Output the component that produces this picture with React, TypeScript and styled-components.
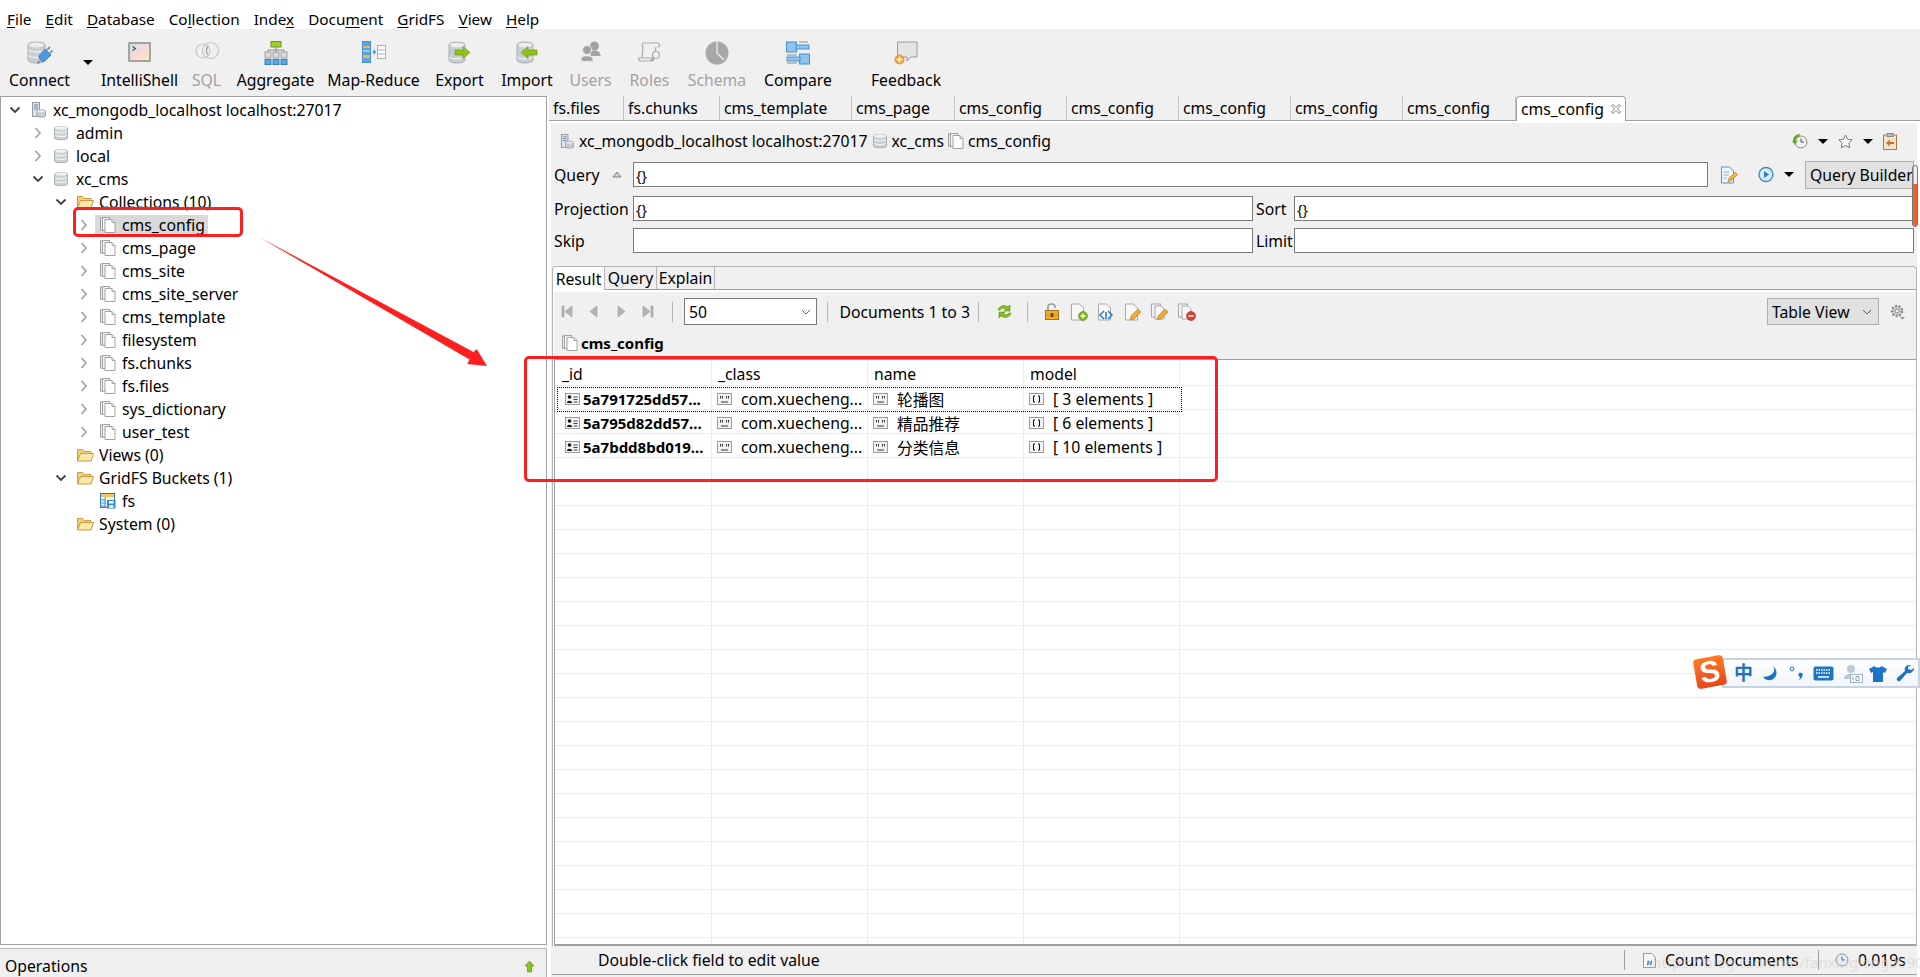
import React from "react";
import styled, { createGlobalStyle } from "styled-components";

const GlobalStyle = createGlobalStyle`
  html, body { margin: 0; padding: 0; background: #fff; }
  body { font-family: "Noto Sans", "Noto Sans CJK SC", sans-serif; font-size: 15.75px; color: #000; }
  * { box-sizing: border-box; }
`;

const Page = styled.div`
  position: relative;
  width: 1920px;
  height: 977px;
  display: flex;
  flex-direction: column;
  overflow: hidden;
  background: #fff;
`;

const MenuBar = styled.div`
  height: 29px;
  display: flex;
  align-items: center;
  gap: 14px;
  padding: 9px 0 0 7px;
  font-size: 15.3px;
  line-height: 20px;
  u { text-underline-offset: 2px; }
`;

const Toolbar = styled.div`
  height: 67px;
  display: flex;
  background: #f0f0f0;
`;

const Tool = styled.div<{ $w: number; $off?: boolean }>`
  width: ${(p) => p.$w}px;
  display: flex;
  flex-direction: column;
  align-items: center;
  padding-top: 12px;
  color: ${(p) => (p.$off ? "#a3a3a3" : "#000")};
  line-height: 20px;
  white-space: nowrap;
`;

const ToolIcon = styled.div`
  height: 29px;
`;

const ToolCaret = styled.div`
  width: 17px;
  padding-top: 31px;
  display: flex;
  justify-content: center;
`;

const Caret = styled.span`
  display: block;
  width: 0;
  height: 0;
  border-left: 5px solid transparent;
  border-right: 5px solid transparent;
  border-top: 5px solid #000;
`;

const Body = styled.div`
  flex: 1;
  display: flex;
  min-height: 0;
`;

const LeftColumn = styled.div`
  width: 547px;
  display: flex;
  flex-direction: column;
`;

const TreePanel = styled.div`
  flex: 1;
  background: #fff;
  border: 1px solid #a0a0a0;
  padding-top: 1px;
`;

const TreeRow = styled.div<{ $level: number }>`
  height: 23px;
  display: flex;
  align-items: center;
  padding-left: ${(p) => 5 + p.$level * 23}px;
  white-space: nowrap;
`;

const Chevron = styled.span`
  width: 18px;
  height: 18px;
  margin-right: 7px;
  display: flex;
  align-items: center;
  justify-content: center;
`;

const TreeEntry = styled.div<{ $sel?: boolean }>`
  display: flex;
  align-items: center;
  height: 20px;
  margin-left: -5px;
  padding: 0 3px 0 5px;
  background: ${(p) => (p.$sel ? "#d9d9d9" : "transparent")};
`;

const TreeIcon = styled.span`
  width: 22px;
  display: flex;
  align-items: center;
`;

const Operations = styled.div`
  height: 29px;
  margin-top: 3px;
  background: #f0f0f0;
  border-top: 1px solid #b4b4b4;
  border-right: 1px solid #b4b4b4;
  display: flex;
  align-items: center;
  justify-content: space-between;
  padding: 6px 11px 0 5px;
`;

const RightColumn = styled.div`
  flex: 1;
  margin-left: 2px;
  margin-right: 3px;
  display: flex;
  flex-direction: column;
  min-width: 0;
`;

const TabStrip = styled.div`
  height: 25px;
  display: flex;
  border-bottom: 1px solid #a0a0a0;
  background: #f0f0f0;
  margin-right: -3px;
`;

const EditorTab = styled.div<{ $w: number; $active?: boolean }>`
  width: ${(p) => p.$w}px;
  height: ${(p) => (p.$active ? "25px" : "24px")};
  padding-left: 4px;
  display: flex;
  align-items: center;
  gap: 6px;
  white-space: nowrap;
  background: ${(p) => (p.$active ? "#fff" : "transparent")};
  border-right: 1px solid ${(p) => (p.$active ? "#a0a0a0" : "#c4c4c4")};
  border-left: ${(p) => (p.$active ? "1px solid #a0a0a0" : "none")};
  border-top: ${(p) => (p.$active ? "1px solid #a0a0a0" : "none")};
  border-radius: ${(p) => (p.$active ? "4px 4px 0 0" : "0")};
`;

const Editor = styled.div`
  flex: 1;
  min-height: 0;
  display: flex;
  flex-direction: column;
  background: #f0f0f0;
  border-top: 2px solid #fff;
  border-left: 2px solid #fff;
`;

const Breadcrumb = styled.div`
  height: 36px;
  margin-bottom: 3px;
  display: flex;
  align-items: center;
  justify-content: space-between;
  padding: 0 20px 0 9px;
`;

const Crumbs = styled.div`
  display: flex;
  align-items: center;
  white-space: nowrap;
`;

const CrumbIcon = styled.span<{ $gap?: number; $after?: number }>`
  display: flex;
  margin-left: ${(p) => p.$gap ?? 0}px;
  margin-right: ${(p) => p.$after ?? 5}px;
`;

const CrumbTools = styled.div`
  display: flex;
  align-items: center;
  gap: 10px;
`;

const FormRow = styled.div<{ $top: number }>`
  height: 25px;
  margin-top: ${(p) => p.$top}px;
  display: flex;
  align-items: center;
  padding-left: 3px;
`;

const FieldLabel = styled.div<{ $w: number }>`
  width: ${(p) => p.$w}px;
  display: flex;
  align-items: center;
  justify-content: space-between;
  padding-right: 11px;
  white-space: nowrap;
`;

const SideLabel = styled.div`
  width: 41px;
  padding-left: 3px;
  white-space: nowrap;
`;

const QueryField = styled.input<{ $w: number }>`
  width: ${(p) => p.$w}px;
  height: 25px;
  border: 1px solid #7a7a7a;
  background: #fff;
  padding: 0 2px;
  margin: 0;
  font-family: inherit;
  font-size: 14.5px;
  color: #000;
  outline: none;
`;

const QueryActions = styled.div`
  display: flex;
  align-items: center;
  margin-left: 12px;
`;

const PlaySlot = styled.span`
  width: 36px;
  margin-left: 9.5px;
  display: flex;
  justify-content: center;
`;

const QueryBuilder = styled.div`
  width: 109px;
  height: 28px;
  margin-left: 11.5px;
  background: #e1e1e1;
  border: 1px solid #adadad;
  padding-left: 4px;
  display: flex;
  align-items: center;
  white-space: nowrap;
  overflow: hidden;
`;

const Folder = styled.div`
  flex: 1;
  min-height: 0;
  margin-top: 13px;
  margin-left: 1px;
  display: flex;
  flex-direction: column;
  border: 1px solid #b4b4b4;
  border-bottom: none;
  border-radius: 4px 4px 0 0;
`;

const FolderTabs = styled.div`
  height: 23px;
  display: flex;
  border-bottom: 1px solid #a0a0a0;
  flex-shrink: 0;
`;

const FolderTab = styled.div<{ $w: number; $active?: boolean }>`
  width: ${(p) => p.$w}px;
  height: ${(p) => (p.$active ? "23px" : "22px")};
  display: flex;
  align-items: center;
  justify-content: center;
  background: ${(p) => (p.$active ? "#fff" : "transparent")};
  border-right: 1px solid #b4b4b4;
  border-radius: ${(p) => (p.$active ? "4px 0 0 0" : "0")};
`;

const ResultPane = styled.div`
  flex: 1;
  min-height: 0;
  display: flex;
  flex-direction: column;
  border-top: 2px solid #fff;
  border-left: 1px solid #fff;
`;

const ResultBar = styled.div`
  height: 39px;
  display: flex;
  align-items: center;
  flex-shrink: 0;
`;

const NavSlot = styled.span<{ $w: number }>`
  width: ${(p) => p.$w}px;
  display: flex;
  justify-content: center;
  align-items: center;
`;

const BarDivider = styled.span<{ $l: number; $r: number }>`
  width: 1px;
  height: 20px;
  background: #b4b4b4;
  margin: 0 ${(p) => p.$r}px 0 ${(p) => p.$l}px;
`;

const PageSize = styled.div`
  width: 133px;
  height: 27px;
  background: #fff;
  border: 1px solid #7a7a7a;
  display: flex;
  align-items: center;
  justify-content: space-between;
  padding: 0 5px 0 4px;
`;

const DocCount = styled.span`
  width: 126px;
  white-space: nowrap;
`;

const ViewPicker = styled.div`
  width: 112px;
  height: 27px;
  margin-left: auto;
  background: #e1e1e1;
  border: 1px solid #adadad;
  display: flex;
  align-items: center;
  justify-content: space-between;
  padding: 0 6px 0 4px;
  white-space: nowrap;
`;

const GearSlot = styled.span`
  width: 37px;
  display: flex;
  justify-content: center;
`;

const TableTitle = styled.div`
  height: 28px;
  display: flex;
  align-items: center;
  gap: 3px;
  padding: 0 0 5px 8px;
  font-weight: 700;
  font-size: 15px;
  flex-shrink: 0;
`;

const Grid = styled.div`
  flex: 1;
  min-height: 0;
  background: #fff;
  border-top: 1px solid #a0a0a0;
  border-left: 1px solid #a0a0a0;
  border-bottom: 2px solid #a0a0a0;
  overflow: hidden;
`;

const GridRow = styled.div<{ $h: number }>`
  height: ${(p) => p.$h}px;
  display: flex;
  border-bottom: 1px solid #ececec;
`;

const FocusRing = styled(GridRow)`
  position: relative;
  &::after {
    content: "";
    position: absolute;
    left: 2px;
    top: 1px;
    width: 623px;
    height: 23px;
    border: 1px dotted #000;
  }
`;

const GridCell = styled.div<{ $w: number; $pad: number }>`
  width: ${(p) => p.$w}px;
  flex-shrink: 0;
  border-right: 1px solid #ececec;
  padding: 3px 0 0 ${(p) => p.$pad}px;
  display: flex;
  align-items: center;
  gap: 9px;
  white-space: nowrap;
  overflow: hidden;
`;

const IdText = styled.span`
  font-weight: 700;
  font-size: 15px;
  margin-left: -6px;
`;

const StatusBar = styled.div`
  height: 29px;
  margin-left: 1px;
  margin-bottom: 2px;
  flex-shrink: 0;
  border-bottom: 1px solid #a0a0a0;
  display: flex;
  align-items: center;
  padding-left: 46px;
`;

const StatusHint = styled.div`
  width: 1026px;
  white-space: nowrap;
`;

const StatusDivider = styled.span`
  width: 1px;
  height: 20px;
  background: #a0a0a0;
`;

const StatusItem = styled.div<{ $w: number; $pad: number }>`
  width: ${(p) => p.$w}px;
  padding-left: ${(p) => p.$pad}px;
  display: flex;
  align-items: center;
  gap: 9px;
  white-space: nowrap;
`;

const Watermark = styled.div`
  position: absolute;
  left: 1652px;
  top: 952px;
  font-size: 15px;
  color: rgba(205, 205, 205, 0.55);
  white-space: nowrap;
`;

const RedBox = styled.div<{ $x: number; $y: number; $w: number; $h: number }>`
  position: absolute;
  left: ${(p) => p.$x}px;
  top: ${(p) => p.$y}px;
  width: ${(p) => p.$w}px;
  height: ${(p) => p.$h}px;
  border: 3px solid #fe2020;
  border-radius: 5px;
`;

const ArrowLayer = styled.svg`
  position: absolute;
  left: 250px;
  top: 230px;
`;

const ScrollMark = styled.div`
  position: absolute;
  left: 1912px;
  top: 165px;
  width: 6px;
  height: 62px;
  border: 1.5px solid #777;
  border-radius: 3px;
  display: flex;
  align-items: flex-end;
`;

const ScrollFill = styled.div`
  width: 100%;
  height: 42px;
  background: #f0602a;
`;

const ImeBar = styled.div`
  position: absolute;
  left: 1722px;
  top: 658px;
  width: 198px;
  height: 30px;
  background: linear-gradient(#ffffff, #f1f5fa);
  border: 2px solid #c6d3e1;
  display: flex;
  align-items: center;
  color: #1c74c4;
`;

const ImeLogo = styled.div`
  position: absolute;
  left: 1695px;
  top: 657px;
  width: 30px;
  height: 30px;
  border-radius: 4px;
  transform: rotate(-10deg);
  background: linear-gradient(#ff7a25, #e8451b);
  color: #fff;
  font-family: "Liberation Sans", sans-serif;
  font-weight: 700;
  font-size: 30px;
  line-height: 30px;
  text-align: center;
`;

const ImeSlot = styled.span<{ $w: number; $ml: number }>`
  width: ${(p) => p.$w}px;
  margin-left: ${(p) => p.$ml}px;
  display: flex;
  justify-content: center;
  align-items: center;
  font-weight: 700;
  font-size: 19px;
  line-height: 1;
`;

// ---- icons ----

const Expand = () => (
  <svg width="12" height="8" viewBox="0 0 12 8">
    <path d="M1.500 1.500 6 6l4.500-4.500" fill="none" stroke="#404040" strokeWidth="1.800" />
  </svg>
);

const Collapse = () => (
  <svg width="8" height="12" viewBox="0 0 8 12">
    <path d="M1.500 1 6 6l-4.500 5" fill="none" stroke="#a6a6a6" strokeWidth="1.800" />
  </svg>
);

const Db = ({ w = 14, h = 16 }: { w?: number; h?: number }) => (
  <svg width={w} height={h} viewBox="0 0 14 16">
    <path d="M.5 3C.5 1 13.500 1 13.500 3v10c0 2.200-13 2.200-13 0z" fill="#cdd2d5" stroke="#a8adb0" />
    <ellipse cx="7" cy="3" rx="6" ry="1.800" fill="#eef0f1" />
    <path d="M.8 6.500c2 1.800 10.400 1.800 12.400 0M.8 10.200c2 1.800 10.400 1.800 12.400 0" fill="none" stroke="#f4f5f6" />
  </svg>
);

const Root = ({ s = 15 }: { s?: number }) => (
  <svg width={s} height={s + 1} viewBox="0 0 15 16">
    <rect x="1.500" y=".5" width="7" height="14" fill="#dfe4ea" stroke="#8d99a6" />
    <path d="M3 3h4M3 5h4M3 7h4" stroke="#6a88a8" />
    <path d="M6 9c0-1.500 8.500-1.500 8.500 0v5c0 1.500-8.500 1.500-8.500 0z" fill="#c9ced2" stroke="#a0a5a9" />
    <ellipse cx="10.200" cy="9.200" rx="3.600" ry="1" fill="#eef0f1" />
  </svg>
);

const Coll = () => (
  <svg width="16" height="16" viewBox="0 0 16 16" fill="#fff" stroke="#a2a2a2">
    <rect x=".5" y="1" width="7" height="12" fill="#eee" />
    <rect x="2.500" y=".5" width="7" height="13" fill="#f4f4f4" />
    <path d="M5 2.500h7l3 3v10H5z" />
    <path d="M12 2.500v3h3" fill="#e4e4e4" />
  </svg>
);

const FolderIcon = () => (
  <svg width="17" height="14" viewBox="0 0 17 14">
    <path d="M.5 13V1.500h5l1.500 2h7v2" fill="#f3cf7c" stroke="#c89b45" />
    <path d="M.5 13l3-7.500h13L14 13z" fill="#fde7a7" stroke="#c89b45" />
  </svg>
);

const BucketIcon = () => (
  <svg width="16" height="16" viewBox="0 0 16 16">
    <rect x=".5" y=".5" width="14" height="14" fill="#e8f3fb" stroke="#2f7fb8" />
    <rect x="1" y="1" width="13" height="3" fill="#f2c65c" />
    <path d="M1 7h5M1 10h5M1 13h5M5 4v10" stroke="#4c94c6" />
    <rect x="7" y="7" width="8.500" height="8.500" fill="#3a8ac4" />
    <rect x="9" y="8" width="4.500" height="2.500" fill="#fff" />
    <rect x="9" y="12" width="4.500" height="3" fill="#cfe6f6" />
  </svg>
);

const ConnectIcon = () => (
  <svg width="26" height="24" viewBox="0 0 26 24">
    <path d="M1 4C1 0 18 0 18 4v15c0 4-17 4-17 0z" fill="#c9ced2" stroke="#a9aeb2" />
    <ellipse cx="9.500" cy="4" rx="7.500" ry="2.500" fill="#eceeef" />
    <path d="M1.500 9c2 2.500 14 2.500 16 0M1.500 14.500c2 2.500 14 2.500 16 0" fill="none" stroke="#f3f4f5" strokeWidth="1.200" />
    <path d="M12 15l6-7 6 6-7 6.500c-2 1-5-3-5-5.500z" fill="#4c9be0" stroke="#3a80c0" />
    <path d="M20 9l3-3M23 12l2.500-2.500M13 20l-2.500 2.500" stroke="#8a8f93" strokeWidth="1.800" />
  </svg>
);

const ShellIcon = () => (
  <svg width="24" height="22" viewBox="0 0 24 22">
    <defs>
      <linearGradient id="shellFill" x1="0" y1="0" x2="1" y2="1">
        <stop offset="0" stopColor="#bfe8e6" />
        <stop offset=".5" stopColor="#fbd7d7" />
        <stop offset="1" stopColor="#f7eeb8" />
      </linearGradient>
    </defs>
    <rect x="1" y="2" width="21" height="18" fill="url(#shellFill)" stroke="#8c8c8c" strokeWidth="1.500" />
    <path d="M4.500 5.500l3 2-3 2" fill="none" stroke="#21606a" strokeWidth="1.100" />
  </svg>
);

const SqlIcon = () => (
  <svg width="24" height="20" viewBox="0 0 24 20" fill="none" stroke="#c6c6c6" strokeWidth="1.200">
    <circle cx="8" cy="10" r="7" />
    <circle cx="15.500" cy="9.500" r="8" />
    <path d="M13 5c-2 2-2 7 0 9" stroke="#9c9c9c" />
  </svg>
);

const AggregateIcon = () => (
  <svg width="24" height="24" viewBox="0 0 24 24">
    <rect x="7" y=".5" width="10" height="5.500" fill="#9ccc2e" stroke="#6f9a1a" />
    <path d="M12 6v3M4 9h16M4 9v2M12 9v2M20 9v2" stroke="#8a8a8a" />
    <g fill="#dcdcdc" stroke="#a0a0a0">
      <rect x="1" y="11" width="6" height="6" />
      <rect x="9" y="11" width="6" height="6" />
      <rect x="17" y="11" width="6" height="6" />
    </g>
    <g fill="#58a8e4" stroke="#3a80c0">
      <rect x="1" y="18.500" width="6" height="5" />
      <rect x="9" y="18.500" width="6" height="5" />
      <rect x="17" y="18.500" width="6" height="5" />
    </g>
  </svg>
);

const MapReduceIcon = () => (
  <svg width="24" height="22" viewBox="0 0 24 22">
    <rect x=".5" y=".5" width="8" height="21" fill="#5aa5e4" stroke="#4a90cc" />
    <path d="M1 5h7v2H1zM1 14h7v3H1z" fill="#f2b544" />
    <path d="M1 10h7" stroke="#cfe6f6" />
    <path d="M10 11l3-3v2h1v2h-1v2z" fill="#5aa5e4" />
    <rect x="15.500" y="4.500" width="8" height="13" fill="#fff" stroke="#b0b0b0" />
    <path d="M15.500 9h8M15.500 13h8" stroke="#b0b0b0" />
  </svg>
);

const TransferIcon = ({ out }: { out: boolean }) => (
  <svg width="23" height="23" viewBox="0 0 23 23">
    <path d="M1 4C1 0 17 0 17 4v15c0 4-16 4-16 0z" fill="#c9ced2" stroke="#a9aeb2" />
    <ellipse cx="9" cy="4" rx="7" ry="2.300" fill="#eceeef" />
    <path d="M1.500 16c2 2.500 13 2.500 15 0" fill="none" stroke="#f3f4f5" strokeWidth="1.200" />
    {out ? (
      <path d="M7 9h8V5.500l7 6-7 6V14H7z" fill="#90c21c" stroke="#6f9a1a" strokeWidth=".7" />
    ) : (
      <path d="M21 9h-9V5.500l-7 6 7 6V14h9z" fill="#90c21c" stroke="#6f9a1a" strokeWidth=".7" />
    )}
  </svg>
);

const UsersIcon = () => (
  <svg width="22" height="22" viewBox="0 0 22 22" fill="#a2a2a2">
    <circle cx="14.500" cy="5" r="4.500" />
    <path d="M10 11c2-2 7-2 9 0l2 4H11z" />
    <circle cx="7" cy="9" r="4.500" stroke="#f0f0f0" />
    <path d="M1 21v-4c1-3 10-3 12 0v4l-2-1-2 1-2-1-2 1-2-1z" stroke="#f0f0f0" />
  </svg>
);

const RolesIcon = () => (
  <svg width="24" height="23" viewBox="0 0 24 23" fill="none" stroke="#ababab" strokeWidth="1.200">
    <path d="M6 2h14c2 0 2 4 0 4M6 2c-2 0-2 3-1 4l-1 11H1c-1 1 0 3 2 3h11c1 0 2-1 2-3H4" />
    <path d="M18 6l-1 5" />
    <circle cx="18" cy="14" r="3.500" />
    <path d="M15.500 17l-3 3" strokeWidth="2" />
  </svg>
);

const SchemaIcon = () => (
  <svg width="24" height="24" viewBox="0 0 24 24">
    <circle cx="12" cy="12" r="11.500" fill="#a8a8a8" />
    <path d="M12 1v11l7 7" fill="none" stroke="#f4f4f4" strokeWidth="1.200" />
  </svg>
);

const CompareIcon = () => (
  <svg width="24" height="24" viewBox="0 0 24 24">
    <g fill="#8cc4f0" stroke="#4a90cc">
      <rect x=".5" y="1" width="10" height="10" />
      <rect x="13.500" y="13" width="10" height="10" />
      <rect x="10" y="4" width="13" height="4" />
      <rect x="1" y="16" width="13" height="4" />
    </g>
    <path d="M13 1h9M1 14h10M1 22h10" stroke="#8a8a8a" />
  </svg>
);

const FeedbackIcon = () => (
  <svg width="24" height="24" viewBox="0 0 24 24">
    <path d="M3.500 1h19.500v15h-6l-4 4v-4H3.500z" fill="#e4e4e4" stroke="#9a9a9a" />
    <circle cx="5.500" cy="18.500" r="5" fill="#ee9a3a" />
    <path d="M5.500 15.500v6M2.500 18.500h6" stroke="#fff" strokeWidth="1.600" />
  </svg>
);

const Clear = () => (
  <svg width="12" height="12" viewBox="0 0 12 12" fill="none" stroke="#808080">
    <path d="M1.500 3 3 1.500 6 4.500 9 1.500 10.500 3 7.500 6 10.500 9 9 10.500 6 7.500 3 10.500 1.500 9 4.500 6z" />
  </svg>
);

const HistoryIcon = () => (
  <svg width="16" height="16" viewBox="0 0 16 16">
    <circle cx="9" cy="9" r="6" fill="#f1f1f1" stroke="#8a8a8a" />
    <path d="M9 5.500V9h3" fill="none" stroke="#555" />
    <path d="M1 8c0-4 3-7 7-7l-1 3c-2 0-3 1-3 4l2-1-3 5-3-4z" fill="#5cae1e" />
  </svg>
);

const StarIcon = () => (
  <svg width="15" height="15" viewBox="0 0 15 15">
    <path d="M7.500 1l2 4.300 4.700.6-3.400 3.200.9 4.700-4.200-2.300-4.200 2.300.9-4.700L.8 5.900l4.700-.6z" fill="#fff" stroke="#777" />
  </svg>
);

const ClipIcon = () => (
  <svg width="14" height="17" viewBox="0 0 14 17">
    <rect x=".5" y="2" width="13" height="14.500" fill="#f6e2c4" stroke="#b47a3c" />
    <rect x="4" y=".5" width="6" height="3" fill="#bbb" stroke="#888" />
    <path d="M11 9H7V6.500L3 10l4 3.500V11h4z" fill="#c0762e" />
  </svg>
);

const EditDocIcon = () => (
  <svg width="18" height="18" viewBox="0 0 18 18">
    <path d="M1.500 1h8l4 4v12h-12z" fill="#eef5fb" stroke="#5c92bf" />
    <path d="M3.500 6h6M3.500 9h5M3.500 12h3" stroke="#8bb4d6" />
    <path d="M8 16l1-4 6-6 2.500 2.500-6 6z" fill="#f0b43c" stroke="#b47a20" strokeWidth=".6" />
  </svg>
);

const PlayIcon = () => (
  <svg width="16" height="17" viewBox="0 0 16 17">
    <circle cx="8" cy="8.500" r="7" fill="#d8ecfb" stroke="#3c8ed0" strokeWidth="1.400" />
    <path d="M6 5l5 3.500L6 12z" fill="#2f7fc4" />
  </svg>
);

const NavIcon = ({ d }: { d: string }) => (
  <svg width="14" height="15" viewBox="0 0 14 15">
    <path d={d} fill="#b4b4b4" stroke="#9a9a9a" strokeWidth=".6" />
  </svg>
);

const RefreshIcon = () => (
  <svg width="17" height="17" viewBox="0 0 17 17" fill="#86bb22" stroke="#5f8f12" strokeWidth=".6">
    <path d="M2 7c1-4 6-6 10-3l2-2v6H8l2-2c-2-1-5-1-6 1z" />
    <path d="M15 10c-1 4-6 6-10 3l-2 2V9h6l-2 2c2 1 5 1 6-1z" />
  </svg>
);

const LockIcon = () => (
  <svg width="14" height="17" viewBox="0 0 14 17">
    <path d="M3 8V4c0-4 7-4 7 0v1" fill="none" stroke="#9a9a9a" strokeWidth="1.600" />
    <rect x=".5" y="7.500" width="13" height="9" fill="#f0ad2e" stroke="#a8701a" />
    <rect x="5.500" y="10" width="3" height="4" fill="#7a4e10" />
    <path d="M1.500 12h3M9.500 12h3" stroke="#c98a20" />
  </svg>
);

const SheetIcon = ({ stacked, badge }: { stacked?: boolean; badge: "add" | "code" | "edit" | "del" }) => (
  <svg width="18" height="18" viewBox="0 0 18 18">
    {stacked && <rect x=".5" y="1" width="9" height="13" fill="#f4f4f4" stroke="#a8a8a8" />}
    <path d={stacked ? "M4 3h6l3 3v10H4z" : "M1.500 1h8l4 4v12h-12z"} fill="#f8f8f8" stroke="#a8a8a8" />
    {badge === "add" && (
      <g>
        <circle cx="13" cy="13" r="4.500" fill="#7cb81e" stroke="#5f8f12" strokeWidth=".6" />
        <path d="M13 10.500v5M10.500 13h5" stroke="#fff" strokeWidth="1.400" />
      </g>
    )}
    {badge === "code" && (
      <path d="M7 8l-4 4 4 4M11 8l4 4-4 4M9 9v7" fill="none" stroke="#2f7fc4" strokeWidth="1.600" />
    )}
    {badge === "edit" && (
      <path d="M6 17l1-4 7-7 3 3-7 7z" fill="#f0a838" stroke="#b47a20" strokeWidth=".6" />
    )}
    {badge === "del" && (
      <g>
        <circle cx="13" cy="13" r="4.500" fill="#e03c32" stroke="#a82820" strokeWidth=".6" />
        <path d="M10.500 13h5" stroke="#fff" strokeWidth="1.600" />
      </g>
    )}
  </svg>
);

const Gear = () => (
  <svg width="17" height="17" viewBox="0 0 17 17">
    <circle cx="8" cy="8" r="5" fill="#d0d0d0" stroke="#8c8c8c" strokeWidth="2.500" strokeDasharray="2 1.500" />
    <circle cx="8" cy="8" r="2" fill="#f0f0f0" stroke="#8c8c8c" />
    <path d="M11 14l2.500 2.500L16 14z" fill="#8c8c8c" />
  </svg>
);

const SmallChevron = () => (
  <svg width="10" height="6" viewBox="0 0 10 6">
    <path d="M1 1l4 4 4-4" fill="none" stroke="#606060" />
  </svg>
);

const DocField = () => (
  <svg width="15" height="12" viewBox="0 0 15 12">
    <rect x=".5" y=".5" width="14" height="11" fill="#f4f4f4" stroke="#9a9a9a" />
    <circle cx="4.500" cy="4" r="1.800" fill="#111" />
    <path d="M2 10c0-3 5-3 5 0z" fill="#111" />
    <path d="M8.500 4h4M8.500 6.500h4M8.500 9h4" stroke="#444" />
  </svg>
);

const TextField = () => (
  <svg width="15" height="12" viewBox="0 0 15 12">
    <rect x=".5" y=".5" width="14" height="11" fill="#f4f4f4" stroke="#9a9a9a" />
    <path d="M3.500 3v2.500M5.500 3v2.500M9.500 3v2.500M11.500 3v2.500M4 9h7" stroke="#333" />
  </svg>
);

const ArrayField = () => (
  <svg width="15" height="12" viewBox="0 0 15 12">
    <rect x=".5" y=".5" width="14" height="11" fill="#f4f4f4" stroke="#9a9a9a" />
    <path d="M6 3H4.500v6H6M9 3h1.500v6H9" fill="none" stroke="#111" />
  </svg>
);

const UpArrow = () => (
  <svg width="11" height="13" viewBox="0 0 11 13">
    <path d="M5.500 1l4.500 5H7.500v6h-4V6H1z" fill="#8ac31e" stroke="#5f8f12" strokeWidth=".7" />
  </svg>
);

const CountIcon = () => (
  <svg width="13" height="15" viewBox="0 0 13 15">
    <path d="M.5.500h8l4 4v10H.5z" fill="#f8f8f8" stroke="#9a9a9a" />
    <path d="M4 9h5M4 11h5M5.500 7.500l-1 5M8.500 7.500l-1 5" stroke="#2f6fa8" strokeWidth=".8" />
  </svg>
);

const ClockIcon = () => (
  <svg width="14" height="14" viewBox="0 0 14 14">
    <circle cx="7" cy="7" r="6" fill="#e8eef6" stroke="#8a8f96" />
    <path d="M7 3.500V7h3" fill="none" stroke="#3c64a8" />
  </svg>
);

const Moon = () => (
  <svg width="17" height="17" viewBox="0 0 17 17">
    <path d="M11 1c3 4 1 10-10 11 3 4 8 4 11 1.500C16 10 15 4 11 1z" fill="currentColor" />
  </svg>
);

const Punct = () => (
  <svg width="15" height="15" viewBox="0 0 15 15" fill="currentColor">
    <circle cx="3" cy="3" r="1.800" fill="none" stroke="currentColor" />
    <path d="M10 7c3-1 5 1 3 4-1 1.500-2 2.500-3.500 3.500 1-1.500 1.500-2.500 1.500-3.500-1.500 0-2-3-1-4z" />
  </svg>
);

const Keyboard = () => (
  <svg width="21" height="15" viewBox="0 0 21 15">
    <rect x=".5" y=".5" width="20" height="14" rx="2" fill="currentColor" />
    <path d="M3 4h15M3 7h15" stroke="#fff" strokeWidth="1.500" strokeDasharray="1.500 1" />
    <path d="M5 11h11" stroke="#fff" strokeWidth="1.500" />
  </svg>
);

const ImeUser = () => (
  <svg width="20" height="19" viewBox="0 0 20 19">
    <circle cx="8" cy="5" r="4" fill="#bcc8d6" />
    <path d="M1 15c0-7 14-7 14 0z" fill="#bcc8d6" />
    <rect x="7.500" y="10.500" width="12" height="8" fill="#fff" stroke="#9fb0c2" />
    <path d="M10 12.500v4M13 12.500h3v4h-3z" fill="none" stroke="#8ca0b6" />
  </svg>
);

const Shirt = () => (
  <svg width="18" height="17" viewBox="0 0 18 17">
    <path d="M5.500 1c1 2 6 2 7 0L18 4l-2 4-2-1v10H4V7L2 8 0 4z" fill="currentColor" />
  </svg>
);

const Wrench = () => (
  <svg width="19" height="18" viewBox="0 0 19 18">
    <path d="M13 1c-3 0-5 3-4 6L1 14c-1 2 1 4 3 3l7-8c3 1 7-1 7-5l-3 2-3-1V3l3-2z" fill="currentColor" />
  </svg>
);

// ---- data ----

const menus: [string, string, string][] = [
  ["", "F", "ile"],
  ["", "E", "dit"],
  ["", "D", "atabase"],
  ["Co", "l", "lection"],
  ["Inde", "x", ""],
  ["Docu", "m", "ent"],
  ["", "G", "ridFS"],
  ["", "V", "iew"],
  ["", "H", "elp"],
];

const editorTabs: [string, number][] = [
  ["fs.files", 75],
  ["fs.chunks", 96],
  ["cms_template", 132],
  ["cms_page", 103],
  ["cms_config", 112],
  ["cms_config", 112],
  ["cms_config", 112],
  ["cms_config", 112],
  ["cms_config", 113],
];

const collections = [
  "cms_config",
  "cms_page",
  "cms_site",
  "cms_site_server",
  "cms_template",
  "filesystem",
  "fs.chunks",
  "fs.files",
  "sys_dictionary",
  "user_test",
];

const docs = [
  ["5a791725dd57...", "com.xuecheng...", "轮播图", "[ 3 elements ]"],
  ["5a795d82dd57...", "com.xuecheng...", "精品推荐", "[ 6 elements ]"],
  ["5a7bdd8bd019...", "com.xuecheng...", "分类信息", "[ 10 elements ]"],
];

const colWidths = [157, 156, 156, 156];
const blankRows = Array.from({ length: 21 }, (_, i) => i);

export default function App() {
  return (
    <Page>
      <GlobalStyle />
      <MenuBar>
        {menus.map(([a, u, b]) => (
          <span key={a + u + b}>
            {a}
            <u>{u}</u>
            {b}
          </span>
        ))}
      </MenuBar>

      <Toolbar>
        <Tool $w={79}>
          <ToolIcon><ConnectIcon /></ToolIcon>
          Connect
        </Tool>
        <ToolCaret><Caret /></ToolCaret>
        <Tool $w={87}>
          <ToolIcon><ShellIcon /></ToolIcon>
          IntelliShell
        </Tool>
        <Tool $w={47} $off>
          <ToolIcon><SqlIcon /></ToolIcon>
          SQL
        </Tool>
        <Tool $w={91}>
          <ToolIcon><AggregateIcon /></ToolIcon>
          Aggregate
        </Tool>
        <Tool $w={105}>
          <ToolIcon><MapReduceIcon /></ToolIcon>
          Map-Reduce
        </Tool>
        <Tool $w={67}>
          <ToolIcon><TransferIcon out /></ToolIcon>
          Export
        </Tool>
        <Tool $w={68}>
          <ToolIcon><TransferIcon out={false} /></ToolIcon>
          Import
        </Tool>
        <Tool $w={59} $off>
          <ToolIcon><UsersIcon /></ToolIcon>
          Users
        </Tool>
        <Tool $w={59} $off>
          <ToolIcon><RolesIcon /></ToolIcon>
          Roles
        </Tool>
        <Tool $w={76} $off>
          <ToolIcon><SchemaIcon /></ToolIcon>
          Schema
        </Tool>
        <Tool $w={86}>
          <ToolIcon><CompareIcon /></ToolIcon>
          Compare
        </Tool>
        <Tool $w={130}>
          <ToolIcon><FeedbackIcon /></ToolIcon>
          Feedback
        </Tool>
      </Toolbar>

      <Body>
        <LeftColumn>
          <TreePanel>
            <TreeRow $level={0}>
              <Chevron><Expand /></Chevron>
              <TreeEntry><TreeIcon><Root /></TreeIcon>xc_mongodb_localhost localhost:27017</TreeEntry>
            </TreeRow>
            <TreeRow $level={1}>
              <Chevron><Collapse /></Chevron>
              <TreeEntry><TreeIcon><Db /></TreeIcon>admin</TreeEntry>
            </TreeRow>
            <TreeRow $level={1}>
              <Chevron><Collapse /></Chevron>
              <TreeEntry><TreeIcon><Db /></TreeIcon>local</TreeEntry>
            </TreeRow>
            <TreeRow $level={1}>
              <Chevron><Expand /></Chevron>
              <TreeEntry><TreeIcon><Db /></TreeIcon>xc_cms</TreeEntry>
            </TreeRow>
            <TreeRow $level={2}>
              <Chevron><Expand /></Chevron>
              <TreeEntry><TreeIcon><FolderIcon /></TreeIcon>Collections (10)</TreeEntry>
            </TreeRow>
            {collections.map((name, i) => (
              <TreeRow $level={3} key={name}>
                <Chevron><Collapse /></Chevron>
                <TreeEntry $sel={i === 0}><TreeIcon><Coll /></TreeIcon>{name}</TreeEntry>
              </TreeRow>
            ))}
            <TreeRow $level={2}>
              <Chevron />
              <TreeEntry><TreeIcon><FolderIcon /></TreeIcon>Views (0)</TreeEntry>
            </TreeRow>
            <TreeRow $level={2}>
              <Chevron><Expand /></Chevron>
              <TreeEntry><TreeIcon><FolderIcon /></TreeIcon>GridFS Buckets (1)</TreeEntry>
            </TreeRow>
            <TreeRow $level={3}>
              <Chevron />
              <TreeEntry><TreeIcon><BucketIcon /></TreeIcon>fs</TreeEntry>
            </TreeRow>
            <TreeRow $level={2}>
              <Chevron />
              <TreeEntry><TreeIcon><FolderIcon /></TreeIcon>System (0)</TreeEntry>
            </TreeRow>
          </TreePanel>
          <Operations>
            Operations
            <UpArrow />
          </Operations>
        </LeftColumn>

        <RightColumn>
          <TabStrip>
            {editorTabs.map(([name, w], i) => (
              <EditorTab $w={w} key={i}>{name}</EditorTab>
            ))}
            <EditorTab $w={110} $active>
              cms_config
              <Clear />
            </EditorTab>
          </TabStrip>

          <Editor>
            <Breadcrumb>
              <Crumbs>
                <CrumbIcon><Root s={14} /></CrumbIcon>
                xc_mongodb_localhost localhost:27017
                <CrumbIcon $gap={5}><Db w={14} h={16} /></CrumbIcon>
                xc_cms
                <CrumbIcon $gap={4} $after={4}><Coll /></CrumbIcon>
                cms_config
              </Crumbs>
              <CrumbTools>
                <HistoryIcon />
                <Caret />
                <StarIcon />
                <Caret />
                <ClipIcon />
              </CrumbTools>
            </Breadcrumb>

            <FormRow $top={0}>
              <FieldLabel $w={79}>
                Query
                <svg width="10" height="7" viewBox="0 0 10 7">
                  <path d="M5 1l4 5H1z" fill="#d0d0d0" stroke="#808080" />
                </svg>
              </FieldLabel>
              <QueryField $w={1075} defaultValue="{}" />
              <QueryActions>
                <EditDocIcon />
                <PlaySlot><PlayIcon /></PlaySlot>
                <Caret />
                <QueryBuilder>Query Builder</QueryBuilder>
              </QueryActions>
            </FormRow>
            <FormRow $top={9}>
              <FieldLabel $w={79}>Projection</FieldLabel>
              <QueryField $w={620} defaultValue="{}" />
              <SideLabel>Sort</SideLabel>
              <QueryField $w={620} defaultValue="{}" />
            </FormRow>
            <FormRow $top={7}>
              <FieldLabel $w={79}>Skip</FieldLabel>
              <QueryField $w={620} />
              <SideLabel>Limit</SideLabel>
              <QueryField $w={620} />
            </FormRow>

            <Folder>
              <FolderTabs>
                <FolderTab $w={52} $active>Result</FolderTab>
                <FolderTab $w={52}>Query</FolderTab>
                <FolderTab $w={58}>Explain</FolderTab>
              </FolderTabs>
              <ResultPane>
                <ResultBar>
                  <NavSlot $w={25.5}><NavIcon d="M2 2h2v11H2zM12 2v11L5 7.500z" /></NavSlot>
                  <NavSlot $w={27.5}><NavIcon d="M11 2v11L4 7.500z" /></NavSlot>
                  <NavSlot $w={27.5}><NavIcon d="M4 2v11l7-5.500z" /></NavSlot>
                  <NavSlot $w={27}><NavIcon d="M2 2v11l7-5.500zM10 2h2v11h-2z" /></NavSlot>
                  <BarDivider $l={10} $r={11.500} />
                  <PageSize>50<SmallChevron /></PageSize>
                  <BarDivider $l={9.500} $r={12} />
                  <DocCount>Documents 1 to 3</DocCount>
                  <BarDivider $l={12.500} $r={9} />
                  <NavSlot $w={32}><RefreshIcon /></NavSlot>
                  <BarDivider $l={6.500} $r={10.500} />
                  <NavSlot $w={27}><LockIcon /></NavSlot>
                  <NavSlot $w={27}><SheetIcon badge="add" /></NavSlot>
                  <NavSlot $w={27}><SheetIcon badge="code" /></NavSlot>
                  <NavSlot $w={27}><SheetIcon badge="edit" /></NavSlot>
                  <NavSlot $w={27}><SheetIcon stacked badge="edit" /></NavSlot>
                  <NavSlot $w={27}><SheetIcon stacked badge="del" /></NavSlot>
                  <ViewPicker>Table View<SmallChevron /></ViewPicker>
                  <GearSlot><Gear /></GearSlot>
                </ResultBar>
                <TableTitle><Coll />cms_config</TableTitle>
                <Grid>
                  <GridRow $h={26}>
                    {["_id", "_class", "name", "model"].map((h, i) => (
                      <GridCell $w={colWidths[i]} $pad={i === 0 ? 7 : 6} key={h}>{h}</GridCell>
                    ))}
                  </GridRow>
                  {docs.map(([id, cls, name, model], i) => {
                    const Row = i === 0 ? FocusRing : GridRow;
                    return (
                      <Row $h={24} key={id}>
                        <GridCell $w={colWidths[0]} $pad={10}><DocField /><IdText>{id}</IdText></GridCell>
                        <GridCell $w={colWidths[1]} $pad={5}><TextField />{cls}</GridCell>
                        <GridCell $w={colWidths[2]} $pad={5}><TextField />{name}</GridCell>
                        <GridCell $w={colWidths[3]} $pad={5}><ArrayField />{model}</GridCell>
                      </Row>
                    );
                  })}
                  {blankRows.map((i) => (
                    <GridRow $h={24} key={i}>
                      {colWidths.map((w, c) => (
                        <GridCell $w={w} $pad={5} key={c} />
                      ))}
                    </GridRow>
                  ))}
                </Grid>
              </ResultPane>
            </Folder>

            <StatusBar>
              <StatusHint>Double-click field to edit value</StatusHint>
              <StatusDivider />
              <StatusItem $w={193} $pad={18}><CountIcon />Count Documents</StatusItem>
              <StatusDivider />
              <StatusItem $w={90} $pad={16}><ClockIcon />0.019s</StatusItem>
            </StatusBar>
          </Editor>
        </RightColumn>
      </Body>

      <Watermark>https://blog.csdn.net/fanxinglong0090</Watermark>
      <ScrollMark><ScrollFill /></ScrollMark>

      <RedBox $x={73} $y={207} $w={170} $h={30} />
      <RedBox $x={524} $y={356} $w={694} $h={126} />
      <ArrowLayer width="240" height="140" viewBox="250 230 240 140">
        <path d="M259 237 473.500 352 476.700 349 487 366 467.300 364 469.500 359.500z" fill="#fe2020" />
      </ArrowLayer>

      <ImeBar>
        <ImeSlot $w={19} $ml={10}>中</ImeSlot>
        <ImeSlot $w={17} $ml={9}><Moon /></ImeSlot>
        <ImeSlot $w={15} $ml={10}><Punct /></ImeSlot>
        <ImeSlot $w={21} $ml={9}><Keyboard /></ImeSlot>
        <ImeSlot $w={20} $ml={9}><ImeUser /></ImeSlot>
        <ImeSlot $w={18} $ml={6}><Shirt /></ImeSlot>
        <ImeSlot $w={19} $ml={9}><Wrench /></ImeSlot>
      </ImeBar>
      <ImeLogo>S</ImeLogo>
    </Page>
  );
}
